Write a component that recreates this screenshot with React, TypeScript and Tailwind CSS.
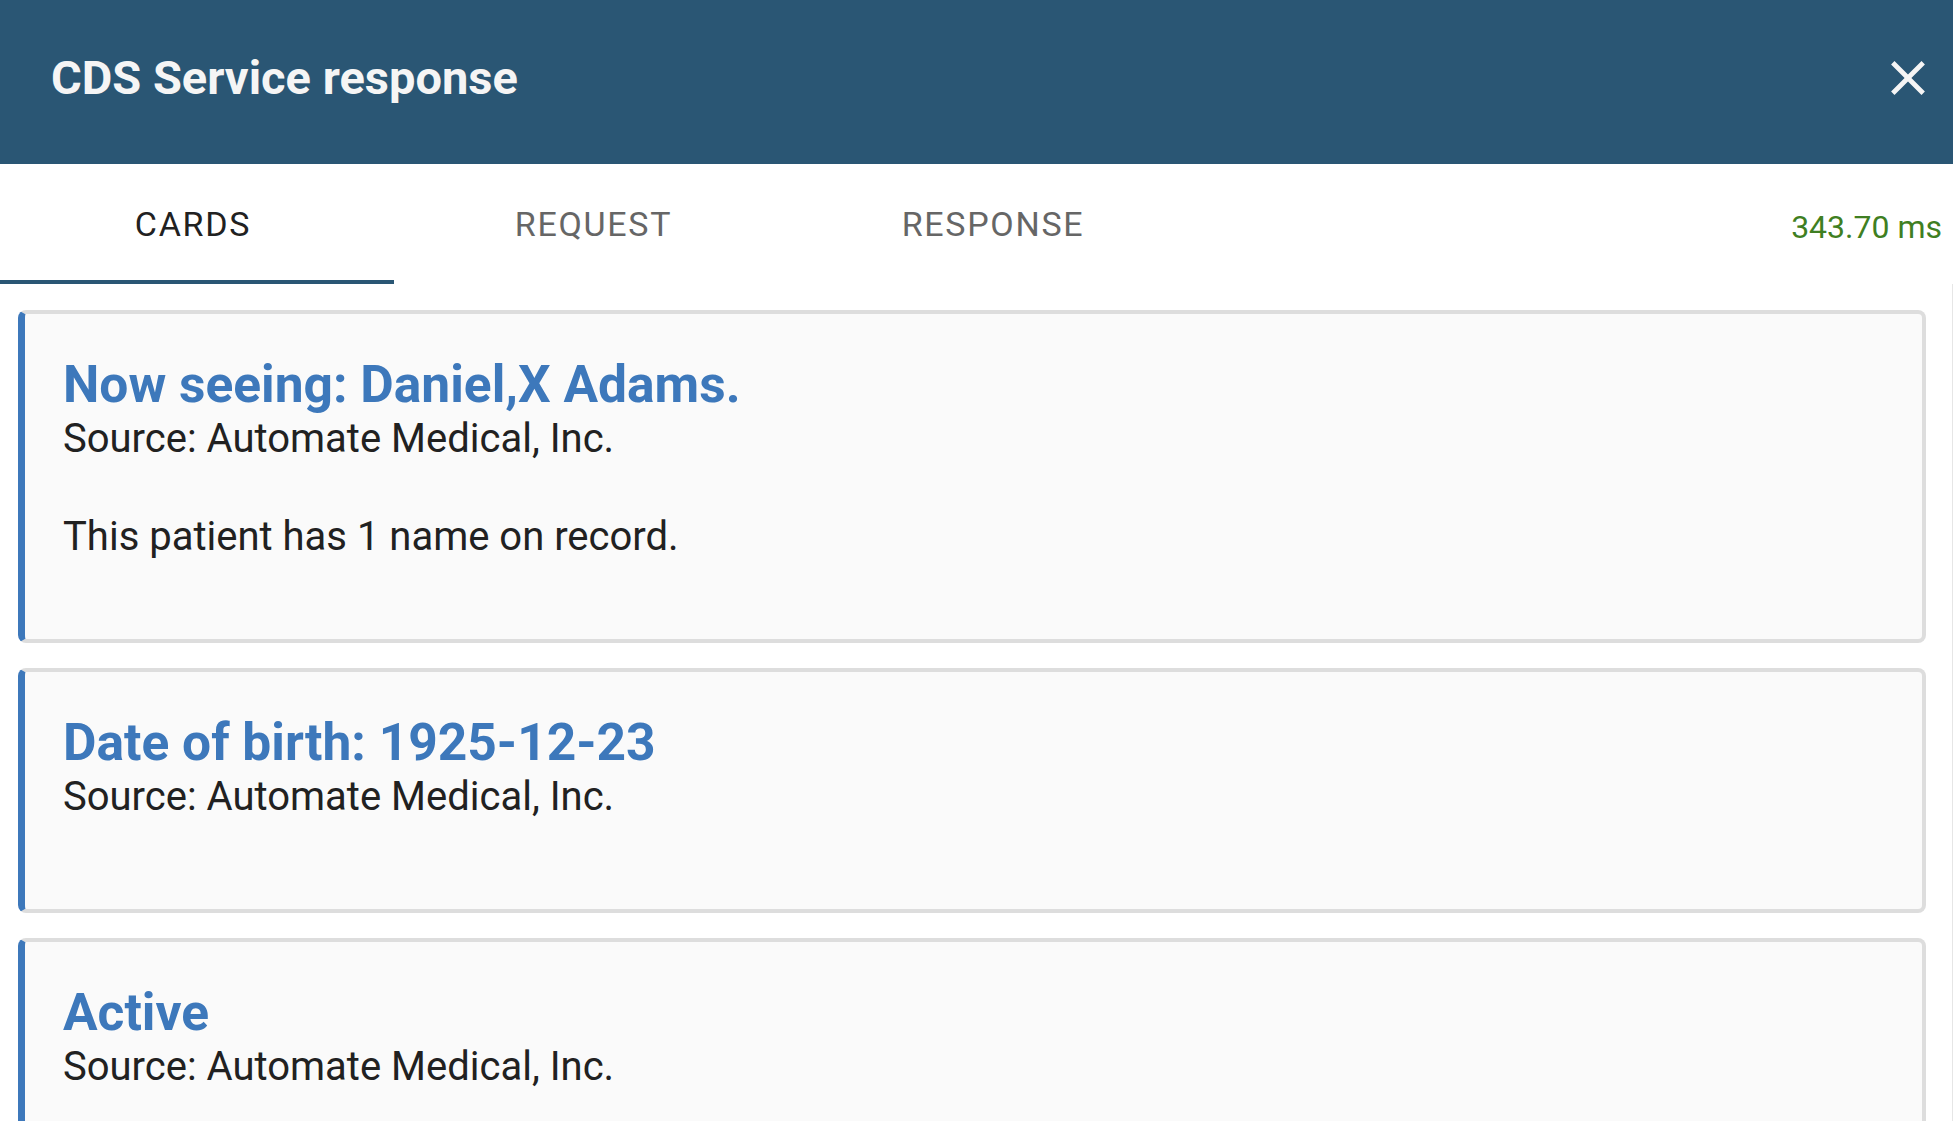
const cards = [
  {
    title: "Now seeing: Daniel,X Adams.",
    source: "Automate Medical, Inc.",
    detail: "This patient has 1 name on record.",
  },
  {
    title: "Date of birth: 1925-12-23",
    source: "Automate Medical, Inc.",
  },
  {
    title: "Active",
    source: "Automate Medical, Inc.",
  },
];

const tabs = [
  { label: "CARDS", width: "w-[394px]", pad: "pr-[8px]", active: true },
  { label: "REQUEST", width: "w-[399px]", pad: "", active: false },
  { label: "RESPONSE", width: "w-[400px]", pad: "", active: false },
];

function CloseIcon() {
  return (
    <svg width="58" height="58" viewBox="0 0 24 24" fill="#f5f5f5">
      <path d="M19 6.41L17.59 5 12 10.59 6.41 5 5 6.41 10.59 12 5 17.59 6.41 19 12 13.41 17.59 19 19 17.59 13.41 12z" />
    </svg>
  );
}

export default function App() {
  return (
    <div className="h-[1121px] w-full overflow-hidden bg-white font-['Roboto',sans-serif] text-[#212121]">
      {/* header */}
      <header className="flex h-[164px] items-start justify-between bg-[#2a5674] pl-[51px] pr-[16px] pt-[50px]">
        <h1 className="text-[47px] font-bold leading-[1.2] text-[#f5f5f5]">CDS Service response</h1>
        <button className="-mt-[1px]">
          <CloseIcon />
        </button>
      </header>

      {/* tabs */}
      <div className="flex h-[120px] items-start justify-between">
        <div className="flex">
          {tabs.map((t) => (
            <div key={t.label} className={`flex h-[120px] flex-col ${t.width}`}>
              <div
                className={`flex-1 pt-[40px] text-center text-[34px] leading-[1.2] tracking-[0.05em] ${t.pad} ${
                  t.active ? "text-[#212121]" : "text-[#666666]"
                }`}
              >
                {t.label}
              </div>
              <div className={`h-[4px] ${t.active ? "bg-[#2a5674]" : "bg-transparent"}`} />
            </div>
          ))}
        </div>
        <div className="pr-[11px] pt-[44px] text-[32px] leading-[1.2] text-[#3f7f22]">343.70 ms</div>
      </div>

      {/* cards */}
      <div className="flex flex-col gap-[25px] border-r border-[#e6e6e6] pb-[40px] pl-[18px] pr-[26px] pt-[26px]">
        {cards.map((c, i) => (
          <div
            key={i}
            className={`rounded-[8px] border-4 border-l-[7px] border-[#dddddd] border-l-[#3d78bb] bg-[#fafafa] pl-[38px] pt-[40px] ${
              c.detail ? "pb-[78px]" : "pb-[88px]"
            }`}
          >
            <div className="text-[51.5px] font-bold leading-[61px] text-[#3d78bb]">{c.title}</div>
            <div className="text-[40px] leading-[48px]">Source: {c.source}</div>
            {c.detail && <div className="mt-[50px] text-[40px] leading-[48px]">{c.detail}</div>}
          </div>
        ))}
      </div>
    </div>
  );
}
